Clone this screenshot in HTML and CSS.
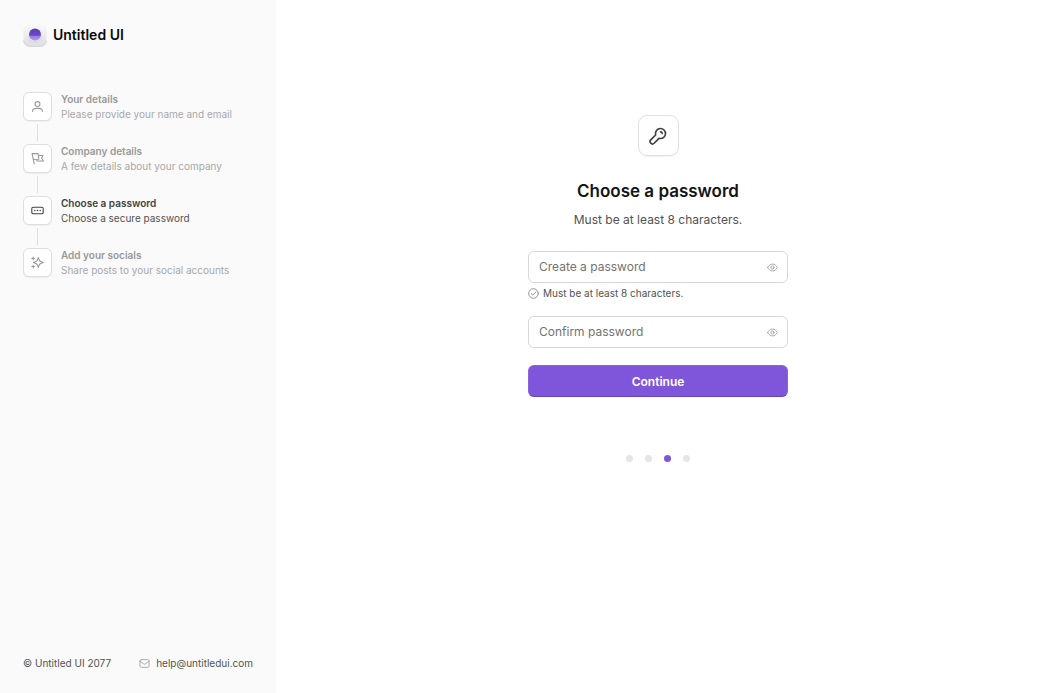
FILE: index.html
```html
<!DOCTYPE html>
<html lang="en">
<head>
<meta charset="utf-8">
<meta name="viewport" content="width=device-width, initial-scale=1">
<title>Untitled UI – Choose a password</title>
<link rel="stylesheet" href="styles.css">
</head>
<body>
<div class="layout">
  <aside class="sidebar">
    <div class="brand">
      <svg class="brand-mark" viewBox="0 0 24 24" aria-hidden="true">
        <defs>
          <linearGradient id="tile" x1="0" y1="0" x2="0" y2="1"><stop offset="0" stop-color="#fafafa"/><stop offset="1" stop-color="#dedee1"/></linearGradient>
          <linearGradient id="orb" x1="0" y1="0" x2="0" y2="1"><stop offset="0" stop-color="#5b3fa6"/><stop offset="0.500" stop-color="#6d47cc"/><stop offset="1" stop-color="#9c80e0"/></linearGradient>
        </defs>
        <rect x="0.500" y="0.500" width="23" height="23" rx="6" fill="url(#tile)"/>
        <path d="M.6 17.500a6 6 0 0 0 6 6h10.800a6 6 0 0 0 6-6" fill="none" stroke="#cfcfd2" stroke-width=".7"/>
        <circle cx="12" cy="11.500" r="6" fill="url(#orb)"/>
        <path d="M5 13h14v3a7 4 0 0 1-14 0z" fill="#d8cff0" opacity=".35"/>
      </svg>
      <span class="brand-name">Untitled UI</span>
    </div>
    <ol class="steps">
      <li class="step">
        <span class="step-icon"><svg class="icon" viewBox="0 0 24 24" aria-hidden="true"><circle cx="12" cy="7.500" r="4.500"/><path d="M3 21c0-4 2.500-5.500 6-5.500h6c3.500 0 6 1.500 6 5.500"/></svg></span>
        <div class="step-text"><h2 class="step-title">Your details</h2><p class="step-note">Please provide your name and email</p></div>
      </li>
      <li class="step">
        <span class="step-icon"><svg class="icon" viewBox="0 0 24 24" aria-hidden="true"><path d="M6 22 2 3h11l1.500 10.500L4.200 14M13.500 6.500H22l-2.500 5 3.500 5H11l-.5-2.500"/></svg></span>
        <div class="step-text"><h2 class="step-title">Company details</h2><p class="step-note">A few details about your company</p></div>
      </li>
      <li class="step step-current" aria-current="step">
        <span class="step-icon"><svg class="icon" viewBox="0 0 24 24" aria-hidden="true"><rect x="1.500" y="6" width="21" height="12" rx="2.500"/><path d="M7 12h.01M12 12h.01M17 12h.01" stroke-width="2.800"/></svg></span>
        <div class="step-text"><h2 class="step-title">Choose a password</h2><p class="step-note">Choose a secure password</p></div>
      </li>
      <li class="step">
        <span class="step-icon"><svg class="icon" viewBox="0 0 24 24" aria-hidden="true"><path d="M4 22v-5M4 7V2M1.500 4.500h5M1.500 19.500h5M13.500 3l-1.700 4.500c-.6 1.600-1.200 2.200-2.800 2.800L4.500 12 9 13.700c1.600.6 2.200 1.200 2.800 2.800l1.700 4.500 1.700-4.500c.6-1.600 1.200-2.200 2.800-2.800l4.500-1.700-4.500-1.700c-1.600-.6-2.200-1.200-2.800-2.800z"/></svg></span>
        <div class="step-text"><h2 class="step-title">Add your socials</h2><p class="step-note">Share posts to your social accounts</p></div>
      </li>
    </ol>
    <footer class="footer">
      <span>© Untitled UI 2077</span>
      <a class="mail" href="mailto:help@untitledui.com">
        <svg class="icon icon-mail" viewBox="0 0 24 24" aria-hidden="true"><rect x="2" y="3.500" width="20" height="17" rx="3.500"/><path d="m2 7 8 5.700q2 1.400 4 0L22 7"/></svg>
        help@untitledui.com
      </a>
    </footer>
  </aside>
  <main class="main">
    <span class="feature-icon"><svg class="icon" viewBox="0 0 24 24" aria-hidden="true"><path d="M17 9a2 2 0 0 0-2-2M9.050 9.780A6 6 0 1 1 14.220 14.950c-.43-.06-.65-.09-.79-.07a1 1 0 0 0-.35.120c-.12.070-.24.190-.47.420L7.300 20.700a2.830 2.830 0 0 1-4-4l5.280-5.310c.23-.23.35-.35.420-.47a1 1 0 0 0 .12-.35c.02-.14-.01-.36-.07-.79Z"/></svg></span>
    <h1 class="title">Choose a password</h1>
    <p class="subtitle">Must be at least 8 characters.</p>
    <form class="form">
      <div class="group">
        <div class="field">
          <input class="input" type="password" placeholder="Create a password" aria-label="Create a password" aria-describedby="hint">
          <button class="reveal" type="button" aria-label="Show password"><svg class="icon" viewBox="0 0 24 24" aria-hidden="true"><path d="M1.500 12C4 7.500 7.500 4.500 12 4.500S20 7.500 22.500 12C20 16.500 16.500 19.500 12 19.500S4 16.500 1.500 12Z"/><circle cx="12" cy="12" r="3.500"/></svg></button>
        </div>
        <p class="hint" id="hint"><svg class="icon icon-check" viewBox="0 0 24 24" aria-hidden="true"><circle cx="12" cy="12" r="10.500"/><path d="m7 12 3.500 3.500 7-7"/></svg>Must be at least 8 characters.</p>
      </div>
      <div class="field">
        <input class="input" type="password" placeholder="Confirm password" aria-label="Confirm password">
        <button class="reveal" type="button" aria-label="Show password confirmation"><svg class="icon" viewBox="0 0 24 24" aria-hidden="true"><path d="M1.500 12C4 7.500 7.500 4.500 12 4.500S20 7.500 22.500 12C20 16.500 16.500 19.500 12 19.500S4 16.500 1.500 12Z"/><circle cx="12" cy="12" r="3.500"/></svg></button>
      </div>
      <button class="submit" type="submit">Continue</button>
    </form>
    <div class="dots" role="img" aria-label="Step 3 of 4">
      <span class="dot"></span><span class="dot"></span><span class="dot dot-active"></span><span class="dot"></span>
    </div>
  </main>
</div>
</body>
</html>
```
FILE: styles.css
```css
* { box-sizing: border-box; }
body, h1, h2, p, ol { margin: 0; padding: 0; }
body {
  font-family: Inter, "Liberation Sans", sans-serif;
  color: #525252;
  background: #fff;
}
button, input { font: inherit; }
.icon {
  display: block;
  fill: none;
  stroke: currentColor;
  stroke-width: 2;
  stroke-linecap: round;
  stroke-linejoin: round;
}
.layout { display: flex; min-height: 100vh; }

.sidebar {
  display: flex;
  flex-direction: column;
  flex: 0 0 276px;
  padding: 23px;
  background: #fafafa;
}
.brand { display: flex; align-items: center; gap: 6px; height: 24px; }
.brand-mark { width: 24px; height: 24px; }
.brand-name { font-size: 14px; line-height: 24px; font-weight: 600; color: #0a0a0a; }

.steps {
  display: flex;
  flex-direction: column;
  gap: 23px;
  margin-top: 45px;
  list-style: none;
}
.step {
  position: relative;
  display: flex;
  gap: 9px;
  color: #a8a8a8;
}
.step:not(:last-child)::after {
  content: "";
  position: absolute;
  top: 32px;
  left: 14px;
  width: 1px;
  height: 17px;
  background: #dedede;
}
.step-icon {
  display: grid;
  place-items: center;
  flex: none;
  width: 29px;
  height: 29px;
  border: 1px solid #dedede;
  border-radius: 6px;
  background: #fff;
  color: #999;
  box-shadow: 0 1px 1px #0000000d;
}
.step-icon .icon { width: 13px; height: 13px; }
.step-title { font-size: 10px; line-height: 15px; font-weight: 600; color: #999; }
.step-note { font-size: 10px; line-height: 14px; }
.step-current { color: #525252; }
.step-current .step-title { color: #414141; }
.step-current .step-icon { color: #414141; }

.footer {
  display: flex;
  align-items: center;
  justify-content: space-between;
  margin-top: auto;
  font-size: 10px;
  line-height: 14px;
}
.mail { display: flex; align-items: center; gap: 6px; color: inherit; text-decoration: none; }
.icon-mail { width: 11px; height: 11px; color: #a3a3a3; }

.main {
  display: flex;
  flex: 1;
  flex-direction: column;
  align-items: center;
  min-width: 0;
  padding: 115px 23px 23px;
}
.feature-icon {
  display: grid;
  place-items: center;
  width: 41px;
  height: 41px;
  border: 1px solid #e0e0e0;
  border-radius: 9px;
  color: #414141;
  box-shadow: 0 1px 1px #0000000d;
}
.feature-icon .icon { width: 20px; height: 20px; }
.title { margin-top: 22px; font-size: 17px; line-height: 26px; font-weight: 600; color: #141414; }
.subtitle { margin-top: 7px; font-size: 12px; line-height: 18px; }
.form {
  display: flex;
  flex-direction: column;
  gap: 17px;
  width: 100%;
  max-width: 260px;
  margin-top: 22px;
}
.group { display: flex; flex-direction: column; gap: 5px; }
.field {
  display: flex;
  align-items: center;
  height: 32px;
  padding: 0 9px 0 10px;
  border: 1px solid #d8d8d8;
  border-radius: 6px;
  background: #fff;
}
.input {
  flex: 1;
  min-width: 0;
  padding: 0;
  border: 0;
  outline: 0;
  background: none;
  font-size: 12px;
  line-height: 18px;
  color: #141414;
}
.input::placeholder { color: #737373; opacity: 1; }
.reveal { padding: 0; border: 0; background: none; color: #a3a3a3; cursor: pointer; }
.reveal .icon { width: 11px; height: 11px; }
.hint { display: flex; align-items: center; gap: 4px; font-size: 10px; line-height: 11px; }
.icon-check { width: 11px; height: 11px; color: #8c8c8c; }
.submit {
  height: 32px;
  padding: 0;
  border: 1px solid #8a64de;
  border-bottom-color: #6544b8;
  border-radius: 6px;
  background: #7f56d9;
  font-size: 12px;
  font-weight: 600;
  color: #fff;
  cursor: pointer;
}
.dots { display: flex; gap: 12px; margin-top: 58px; }
.dot { width: 7px; height: 7px; border-radius: 50%; background: #e5e5e5; }
.dot-active { background: #7f56d9; }
```
